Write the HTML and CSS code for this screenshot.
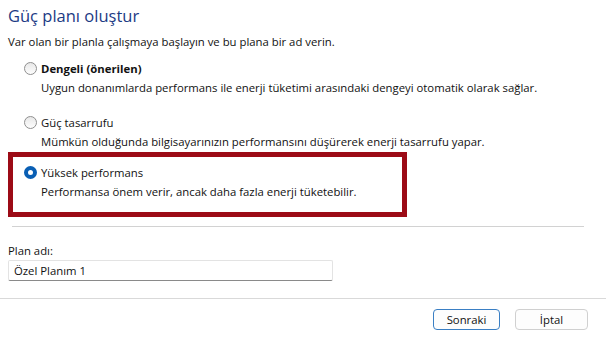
FILE: index.html
```html
<!DOCTYPE html>
<html lang="tr">
<head>
  <meta charset="UTF-8">
  <title>Güç planı oluştur</title>
  <link rel="stylesheet" href="styles.css">
</head>
<body>
  <div class="page">
    <h1>Güç planı oluştur</h1>
    <p class="intro">Var olan bir planla çalışmaya başlayın ve bu plana bir ad verin.</p>

    <!-- Plan seçenekleri -->
    <div class="option">
      <div class="option-title"><span class="radio"></span><b>Dengeli (önerilen)</b></div>
      <div class="option-desc">Uygun donanımlarda performans ile enerji tüketimi arasındaki dengeyi otomatik olarak sağlar.</div>
    </div>
    <div class="option">
      <div class="option-title"><span class="radio"></span>Güç tasarrufu</div>
      <div class="option-desc">Mümkün olduğunda bilgisayarınızın performansını düşürerek enerji tasarrufu yapar.</div>
    </div>
    <div class="highlight">
      <div class="option">
        <div class="option-title"><span class="radio checked"></span>Yüksek performans</div>
        <div class="option-desc">Performansa önem verir, ancak daha fazla enerji tüketebilir.</div>
      </div>
    </div>

    <hr class="sep">

    <label class="name-label" for="plan-name">Plan adı:</label>
    <input type="text" id="plan-name" class="name-input" value="Özel Planım 1">
  </div>

  <div class="footer">
    <button class="btn default">Sonraki</button>
    <button class="btn">İptal</button>
  </div>
</body>
</html>
```

FILE: styles.css
```css
body {
  margin: 0;
  background: #fff;
  font-family: "Open Sans", "Noto Sans", sans-serif;
  font-size: 11.33px;
  color: #111;
  width: 606px;
  height: 340px;
  overflow: hidden;
}
.page {
  padding: 5px 0 0 8px;
}
h1 {
  margin: 0;
  font-size: 16.5px;
  line-height: 22px;
  font-weight: normal;
  color: #1c3a84;
}
.intro {
  margin: 4.5px 0 8px;
  line-height: 19px;
}
.option {
  padding-left: 16px;
}
.option + .option {
  margin-top: 16px;
}
.option-title {
  display: flex;
  align-items: center;
  line-height: 19px;
}
.option-title b {
  font-weight: 700;
}
.option-desc {
  padding-left: 17px;
  line-height: 19px;
}
.radio {
  width: 11px;
  height: 11px;
  border: 1px solid #8f8f8f;
  border-radius: 50%;
  background: linear-gradient(#e8e8e8, #fdfdfd);
  margin-right: 4px;
  box-sizing: content-box;
}
.radio.checked {
  width: 5px;
  height: 5px;
  border: 4px solid #0a5fb4;
  background: #fff;
}
.highlight {
  width: 389px;
  margin-top: 1.5px;
  border: 5px solid #9c0b16;
  padding: 5.5px 0 11.5px;
}
.highlight .option {
  padding-left: 11px;
}
.sep {
  margin: 9px 22px 0 4px;
  border: none;
  border-top: 1px solid #d2d2d2;
  height: 0;
}
.name-label {
  display: block;
  margin-top: 13.5px;
  line-height: 19px;
}
.name-input {
  display: block;
  width: 325px;
  height: 21px;
  box-sizing: border-box;
  padding: 0 5px;
  border: 1px solid #e3e3e3;
  border-bottom: 1px solid #8a8a8a;
  border-radius: 2px;
  font: inherit;
  color: #111;
}
.footer {
  margin-top: 17px;
  border-top: 1px solid #d9d9d9;
  display: flex;
  justify-content: flex-end;
  gap: 15px;
  padding: 10px 18px 0 0;
}
.btn {
  height: 21px;
  padding: 0;
  font: inherit;
  color: #111;
  background: #fdfdfd;
  border: 1px solid #d0d0d0;
  border-radius: 4px;
}
.btn.default {
  width: 67px;
  border-color: #3a7fc4;
}
.btn:not(.default) {
  width: 73px;
}
```
